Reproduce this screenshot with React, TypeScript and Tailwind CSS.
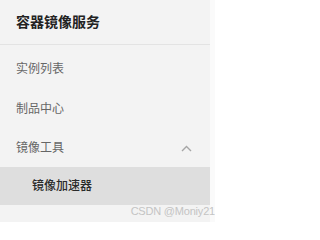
import React from 'react';

const items = ['实例列表', '制品中心'];

export default function App() {
  return (
    <div
      className="relative w-[215px] h-[222px] overflow-hidden bg-[#fafafa] flex"
      style={{ fontFamily: '"Liberation Sans", "Noto Sans CJK SC", sans-serif' }}
    >
      <aside className="w-[210px] h-full bg-[#f3f3f3] flex flex-col">
        <div className="h-[45px] flex items-center px-4 border-b border-[#e3e3e3]">
          <span className="text-[14px] font-bold text-[#222]">容器镜像服务</span>
        </div>
        <nav className="flex flex-col pt-1">
          {items.map((label) => (
            <div key={label} className="h-10 flex items-center px-4 text-[12px] text-[#666]">
              {label}
            </div>
          ))}
          <div className="h-[38px] flex items-center justify-between pl-4 pr-[18px] text-[12px] text-[#666]">
            <span>镜像工具</span>
            <svg width="11" height="7" viewBox="0 0 11 7" fill="none">
              <path d="M1 6 L5.5 1.5 L10 6" stroke="#a6a6a6" strokeWidth="1.4" />
            </svg>
          </div>
          <div className="h-[38px] flex items-center pl-8 bg-[#dedede] text-[12px] font-medium text-[#2a2a2a]">
            镜像加速器
          </div>
        </nav>
      </aside>
      <span className="absolute right-0 bottom-[3px] text-[11px] tracking-[-0.2px] text-[#c4c4c4] whitespace-nowrap">
        CSDN @Moniy21
      </span>
    </div>
  );
}
